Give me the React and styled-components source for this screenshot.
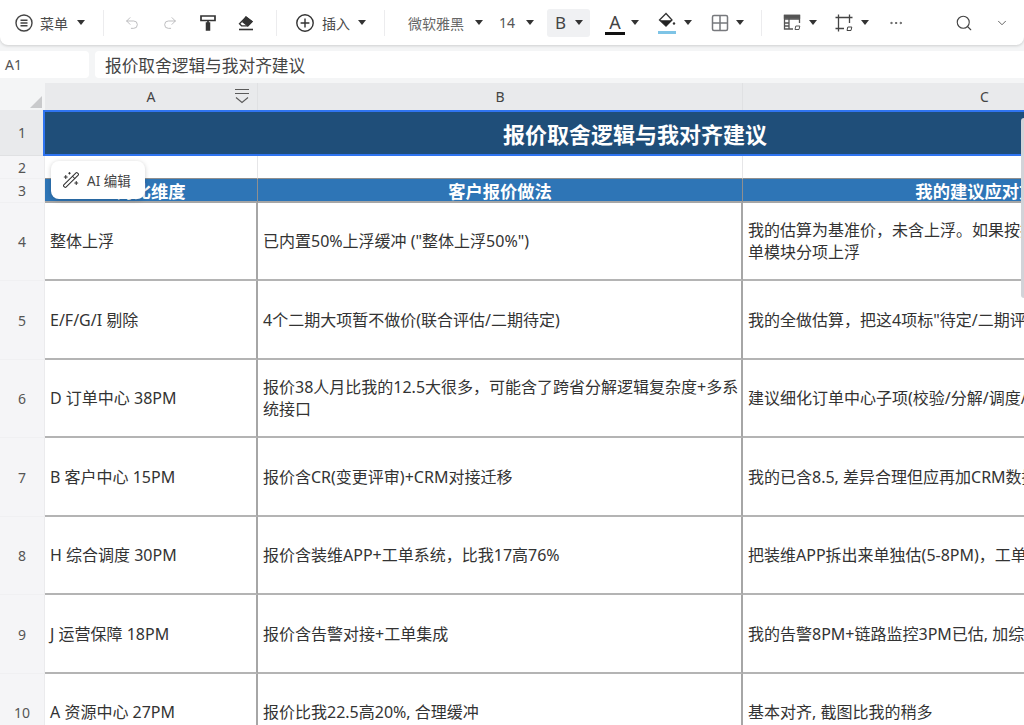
import React from 'react';
import styled, { createGlobalStyle } from 'styled-components';
import { Undo2, Redo2, Search, ChevronDown, Ellipsis, Plus, WandSparkles } from 'lucide-react';

const FONT = `"Noto Sans", "Noto Sans CJK SC", sans-serif`;

const GlobalStyle = createGlobalStyle`
  html, body {
    margin: 0;
    padding: 0;
    height: 100%;
    overflow: hidden;
    background: #f4f5f6;
    font-family: ${FONT};
  }
`;

const Page = styled.div`
  position: relative;
  width: 1024px;
  height: 725px;
  overflow: hidden;
  display: flex;
  flex-direction: column;
  background: #f4f5f6;
`;

const Toolbar = styled.div`
  flex: none;
  height: 45px;
  display: flex;
  align-items: center;
  padding-left: 15px;
  background: #fff;
  border-radius: 0 0 8px 8px;
  box-shadow: 0 1px 3px rgba(0, 0, 0, 0.16);
  color: #444;
`;

const Slot = styled.div`
  flex: none;
  display: flex;
  align-items: center;
  justify-content: center;
  width: ${(p) => p.$w}px;
  margin-left: ${(p) => p.$ml || 0}px;
  color: ${(p) => (p.$muted ? '#b4b4b6' : 'inherit')};
`;

const Label = styled.span`
  flex: none;
  margin-left: ${(p) => p.$ml || 0}px;
  width: ${(p) => p.$w}px;
  font-size: 14px;
  white-space: nowrap;
  color: ${(p) => p.$color || '#4a4a4a'};
`;

const Caret = styled.span`
  flex: none;
  margin-left: ${(p) => p.$ml || 0}px;
  width: 0;
  height: 0;
  border-left: 4px solid transparent;
  border-right: 4px solid transparent;
  border-top: 5px solid #333;
`;

const Divider = styled.span`
  flex: none;
  margin-left: ${(p) => p.$ml || 0}px;
  width: 1px;
  height: 26px;
  background: #ececee;
`;

const BoldButton = styled.div`
  flex: none;
  margin-left: ${(p) => p.$ml || 0}px;
  width: 43px;
  height: 28px;
  display: flex;
  align-items: center;
  padding-left: 8px;
  box-sizing: border-box;
  gap: 9px;
  border-radius: 3px;
  background: #f0f1f3;
  font-size: 17px;
  color: #444;
`;

const ColorGlyph = styled.div`
  flex: none;
  margin-left: ${(p) => p.$ml || 0}px;
  width: 20px;
  height: 24px;
  display: flex;
  flex-direction: column;
  align-items: center;
  justify-content: flex-end;
  font-size: 18px;
  line-height: 20px;
  color: #444;
  border-bottom: 3px solid #111;
  box-sizing: border-box;
`;

const FormulaRow = styled.div`
  flex: none;
  display: flex;
  gap: 6px;
  height: 27px;
  margin-top: 6px;
`;

const NameBox = styled.div`
  flex: none;
  width: 89px;
  box-sizing: border-box;
  padding-left: 5px;
  display: flex;
  align-items: center;
  background: #fff;
  border-radius: 0 4px 4px 0;
  font-size: 14px;
  color: #555;
`;

const FormulaInput = styled.div`
  flex: 1;
  box-sizing: border-box;
  padding-left: 10px;
  display: flex;
  align-items: center;
  background: #fff;
  border-radius: 4px 0 0 4px;
  font-size: 16.7px;
  color: #444;
`;

const Sheet = styled.div`
  flex: none;
  margin-top: 5px;
  display: grid;
  grid-template-columns: 45px 213px 485px 484px;
  grid-template-rows: 27px 46px 23px 24px 78px 79px 78px 79px 78px 79px 78px;
  width: 1227px;
  background: #fff;
`;

const Corner = styled.div`
  display: flex;
  align-items: flex-end;
  justify-content: flex-end;
  padding: 0 3px 2px 0;
  background: #f4f5f6;
`;

const Triangle = styled.span`
  width: 0;
  height: 0;
  border-left: 12px solid transparent;
  border-bottom: 12px solid #c9cacc;
`;

const ColHead = styled.div`
  position: relative;
  display: flex;
  align-items: center;
  justify-content: center;
  background: #e9eaec;
  border-right: 1px solid #e0e1e3;
  font-size: 14px;
  color: #444;
`;

const FilterIcon = styled.span`
  position: absolute;
  right: 7px;
  top: 5px;
  display: flex;
`;

const RowHead = styled.div`
  display: flex;
  align-items: center;
  justify-content: center;
  background: ${(p) => (p.$active ? '#e9eaec' : '#f5f5f7')};
  border-bottom: 1px solid ${(p) => (p.$active ? '#e0e1e3' : '#f0f0f2')};
  border-right: 1px solid #ebebed;
  box-sizing: border-box;
  font-size: 14px;
  color: #555;
`;

const TitleCell = styled.div`
  grid-column: 2 / 5;
  display: flex;
  align-items: center;
  justify-content: center;
  box-sizing: border-box;
  margin-left: -2px;
  border: 2px solid #2f74f0;
  background: #1f4e79;
  color: #fff;
  font-size: 22px;
  font-weight: 700;
`;

const EmptyCell = styled.div`
  border-right: 1px solid #e6e6e8;
  border-bottom: 1px solid #8f8f8f;
`;

const HeadCell = styled.div`
  display: flex;
  align-items: center;
  justify-content: center;
  box-sizing: border-box;
  background: #2e75b6;
  color: #fff;
  font-size: 17.3px;
  font-weight: 700;
  white-space: nowrap;
  border-right: 1px solid #8f8f8f;
  border-bottom: 2px solid #a6a6a6;
`;

const Cell = styled.div`
  display: flex;
  align-items: center;
  box-sizing: border-box;
  padding-left: 5px;
  font-size: 16px;
  line-height: 22px;
  color: #333;
  white-space: pre;
  overflow: hidden;
  border-right: 2px solid #a6a6a6;
  border-bottom: 2px solid #b4b4b4;
`;

const AiPopup = styled.div`
  position: absolute;
  left: 51px;
  top: 161px;
  width: 94px;
  height: 38px;
  display: flex;
  align-items: center;
  gap: 7px;
  padding-left: 11px;
  box-sizing: border-box;
  background: #fff;
  border-radius: 8px;
  box-shadow: 0 1px 5px rgba(0, 0, 0, 0.2);
  font-size: 13.5px;
  color: #444;
  white-space: nowrap;
`;

const ScrollThumb = styled.div`
  position: absolute;
  right: 0;
  top: 118px;
  width: 3px;
  height: 180px;
  background: #d2d3d8;
  border-radius: 3px 0 0 3px;
`;

const MenuIcon = () => (
  <svg width="18" height="18" viewBox="0 0 18 18" fill="none" stroke="#444" strokeWidth="1.4">
    <circle cx="9" cy="9" r="8" />
    <path d="M5.5 6.2h7M5.5 9h7M5.5 11.8h7" />
  </svg>
);

const PaintIcon = () => (
  <svg width="16" height="17" viewBox="0 0 16 17" fill="none" stroke="#333" strokeWidth="1.7">
    <path d="M1 2h14v4.5H1z" />
    <path d="M8 6.5v2.5" />
    <path d="M6.6 9h2.8v7H6.6z" fill="#333" />
  </svg>
);

const EraserIcon = () => (
  <svg width="16" height="16" viewBox="0 0 16 16" fill="none" stroke="#333" strokeWidth="1.3">
    <path d="M1.5 8.8 8 2l6 4.6-4.2 4.2H3.6z" />
    <path d="M8 2l6 4.6-4.2 4.2-5-3.9z" fill="#333" />
    <path d="M1 14.5h14" strokeWidth="1.6" />
  </svg>
);

const FillIcon = () => (
  <svg width="18" height="22" viewBox="0 0 18 22" fill="none">
    <path d="M8 1.5 1.5 8l6.5 6 6-6z" stroke="#333" strokeWidth="1.3" />
    <path d="M2 8.2h12L8 14z" fill="#222" />
    <circle cx="16" cy="11.5" r="1.2" fill="#333" />
    <rect x="0" y="19" width="18" height="3" fill="#7ec4e6" />
  </svg>
);

const BorderIcon = () => (
  <svg width="18" height="18" viewBox="0 0 18 18" fill="none" stroke="#77797d" strokeWidth="1.5">
    <rect x="1.5" y="1.5" width="15" height="15" rx="1.5" />
    <path d="M9 1.5v15M1.5 9h15" />
  </svg>
);

const TableIcon = () => (
  <svg width="18" height="17" viewBox="0 0 18 17" fill="none" stroke="#555" strokeWidth="1.3">
    <path d="M10 15H1.5V1.5h15V9" />
    <path d="M1.5 5h15M6 1.5V15M1.5 9h4.5M1.5 12h4.5" />
    <path d="M1.5 1.5h15V4h-15z" fill="#555" />
    <path d="M12 15.5l.8-3.5h4l-.8 3.5z" strokeWidth="1" />
  </svg>
);

const CropIcon = () => (
  <svg width="18" height="18" viewBox="0 0 18 18" fill="none" stroke="#444" strokeWidth="1.3">
    <path d="M0.5 3.5h17M3.5 0.5v17M0.5 14.5H9M14.5 0.5V9" />
    <path d="M12 16.5l.8-3.5h4l-.8 3.5z" strokeWidth="1" />
  </svg>
);

const FilterGlyph = () => (
  <svg width="16" height="16" viewBox="0 0 16 16" fill="none" stroke="#5a5a5a" strokeWidth="1.1">
    <path d="M1 1.5h14M1 5.5h14" />
    <path d="M2 9.5l6 5 6-5" />
  </svg>
);

const rowHeads = [4, 5, 6, 7, 8, 9, 10];

const rows = [
  ['整体上浮', '已内置50%上浮缓冲 ("整体上浮50%")', '我的估算为基准价，未含上浮。如果按报价口径对齐需逐\n单模块分项上浮'],
  ['E/F/G/I 剔除', '4个二期大项暂不做价(联合评估/二期待定)', '我的全做估算，把这4项标"待定/二期评估"'],
  ['D 订单中心 38PM', '报价38人月比我的12.5大很多，可能含了跨省分解逻辑复杂度+多系\n统接口', '建议细化订单中心子项(校验/分解/调度/路由)'],
  ['B 客户中心 15PM', '报价含CR(变更评审)+CRM对接迁移', '我的已含8.5, 差异合理但应再加CRM数据迁移'],
  ['H 综合调度 30PM', '报价含装维APP+工单系统，比我17高76%', '把装维APP拆出来单独估(5-8PM)，工单系统另算'],
  ['J 运营保障 18PM', '报价含告警对接+工单集成', '我的告警8PM+链路监控3PM已估, 加综合看板'],
  ['A 资源中心 27PM', '报价比我22.5高20%, 合理缓冲', '基本对齐, 截图比我的稍多'],
];

const App = () => (
  <Page>
    <GlobalStyle />
    <Toolbar>
      <Slot $w={18}><MenuIcon /></Slot>
      <Label $ml={7} $w={29}>菜单</Label>
      <Caret $ml={8} />
      <Divider $ml={18} />
      <Slot $ml={20} $w={16} $muted><Undo2 size={18} strokeWidth={1.3} /></Slot>
      <Slot $ml={22} $w={16} $muted><Redo2 size={18} strokeWidth={1.3} /></Slot>
      <Slot $ml={22} $w={16}><PaintIcon /></Slot>
      <Slot $ml={22} $w={16}><EraserIcon /></Slot>
      <Divider $ml={22} />
      <Slot $ml={19} $w={18}>
        <svg width="18" height="18" viewBox="0 0 18 18" fill="none" stroke="#333" strokeWidth="1.4">
          <circle cx="9" cy="9" r="8.2" />
          <path d="M9 4.6v8.8M4.6 9h8.8" />
        </svg>
      </Slot>
      <Label $ml={8} $w={28}>插入</Label>
      <Caret $ml={8} />
      <Divider $ml={18} />
      <Label $ml={23} $w={56} $color="#666">微软雅黑</Label>
      <Caret $ml={11} />
      <Label $ml={16} $w={17} $color="#555">14</Label>
      <Caret $ml={10} />
      <BoldButton $ml={13}>
        B
        <Caret />
      </BoldButton>
      <ColorGlyph $ml={15}>A</ColorGlyph>
      <Caret $ml={6} />
      <Slot $ml={19} $w={18}><FillIcon /></Slot>
      <Caret $ml={8} />
      <Slot $ml={19} $w={18}><BorderIcon /></Slot>
      <Caret $ml={7} />
      <Divider $ml={17} />
      <Slot $ml={21} $w={18}><TableIcon /></Slot>
      <Caret $ml={8} />
      <Slot $ml={18} $w={18}><CropIcon /></Slot>
      <Caret $ml={8} />
      <Slot $ml={19} $w={16}><Ellipsis size={18} strokeWidth={1.5} color="#555" /></Slot>
      <Slot $ml={51} $w={18}><Search size={18} strokeWidth={1.5} color="#444" /></Slot>
      <Slot $ml={22} $w={14}><ChevronDown size={18} strokeWidth={1.4} color="#444" /></Slot>
    </Toolbar>

    <FormulaRow>
      <NameBox>A1</NameBox>
      <FormulaInput>报价取舍逻辑与我对齐建议</FormulaInput>
    </FormulaRow>

    <Sheet>
      <Corner><Triangle /></Corner>
      <ColHead>
        A
        <FilterIcon><FilterGlyph /></FilterIcon>
      </ColHead>
      <ColHead>B</ColHead>
      <ColHead>C</ColHead>

      <RowHead $active>1</RowHead>
      <TitleCell>报价取舍逻辑与我对齐建议</TitleCell>

      <RowHead>2</RowHead>
      <EmptyCell />
      <EmptyCell />
      <EmptyCell />

      <RowHead>3</RowHead>
      <HeadCell>对比维度</HeadCell>
      <HeadCell>客户报价做法</HeadCell>
      <HeadCell>我的建议应对方式</HeadCell>

      {rows.map((cells, i) => (
        <React.Fragment key={rowHeads[i]}>
          <RowHead>{rowHeads[i]}</RowHead>
          {cells.map((text) => (
            <Cell key={text}>{text}</Cell>
          ))}
        </React.Fragment>
      ))}
    </Sheet>

    <AiPopup>
      <WandSparkles size={18} strokeWidth={1.4} color="#333" />
      AI 编辑
    </AiPopup>
    <ScrollThumb />
  </Page>
);

export default App;
